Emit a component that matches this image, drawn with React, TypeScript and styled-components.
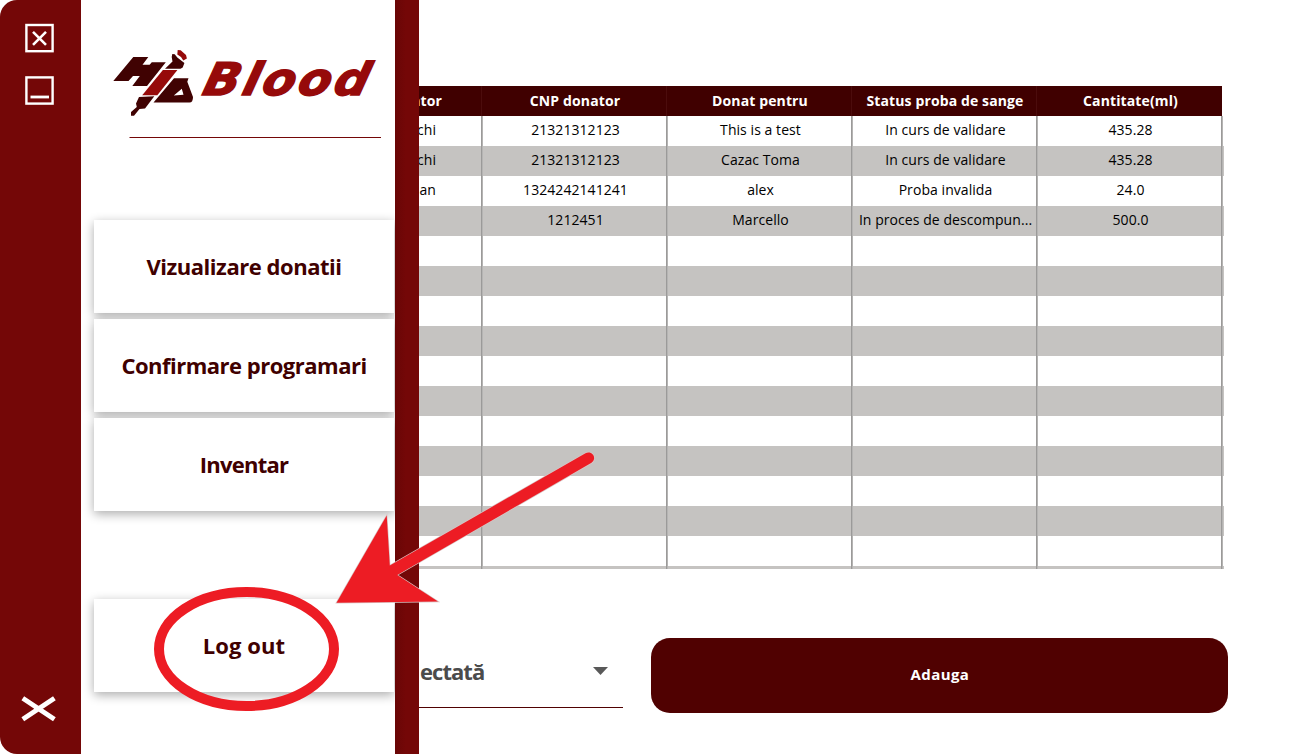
import React from 'react';
import styled, { createGlobalStyle } from 'styled-components';

const GlobalStyle = createGlobalStyle`
  *, *::before, *::after { box-sizing: border-box; }
  body {
    margin: 0;
    background: #fff;
    font-family: "Open Sans", "Noto Sans", sans-serif;
    overflow: hidden;
  }
`;

const Screen = styled.div`
  position: relative;
  display: flex;
  width: 1290px;
  height: 754px;
  overflow: hidden;
  background: #fff;
`;

const Rail = styled.nav`
  display: flex;
  flex-direction: column;
  align-items: center;
  flex: 0 0 81px;
  padding: 23px 3px 31px 0;
  background: #740707;
  border-radius: 17px 0 0 17px;
`;

const RailButton = styled.button<{ $bottom?: boolean }>`
  display: block;
  margin: ${(p) => (p.$bottom ? 'auto 0 0' : '0 0 22px')};
  padding: 0;
  border: 0;
  background: none;
  line-height: 0;
`;

const Drawer = styled.aside`
  display: flex;
  flex-direction: column;
  flex: 0 0 314px;
  padding: 0 1px 0 13px;
  background: #fff;
`;

const LogoBlock = styled.header`
  width: 287px;
  height: 138px;
  margin-bottom: 82px;
`;

const Menu = styled.div`
  display: flex;
  flex-direction: column;
  gap: 6px;
`;

const MenuButton = styled.button<{ $tracking: number; $apart?: boolean }>`
  height: 93px;
  margin-top: ${(p) => (p.$apart ? 82 : 0)}px;
  padding: 0 0 2px;
  border: 0;
  background: #fff;
  box-shadow: 0 3px 10px rgba(0, 0, 0, 0.33);
  color: #400000;
  font: 700 22px/30px "Open Sans", sans-serif;
  letter-spacing: ${(p) => p.$tracking}px;
`;

const Edge = styled.div`
  flex: 0 0 24px;
  background: linear-gradient(90deg, #690606, #740707 45%);
`;

const Main = styled.main`
  display: flex;
  flex-direction: column;
  flex: 1;
  min-width: 0;
  padding-top: 86px;
`;

const Table = styled.div`
  width: 805px;
  height: 483px;
  overflow: hidden;
`;

const HeadRow = styled.div`
  display: grid;
  grid-template-columns: 63px repeat(4, 185px);
  width: 803px;
  height: 30px;
  background: #400000;
`;

const HeadCell = styled.div`
  display: flex;
  align-items: center;
  justify-content: center;
  padding: 0 0 2px 2px;
  border-right: 1px solid #4c0c0c;
  color: #fff;
  font-size: 14px;
  font-weight: 700;
  letter-spacing: 0.12px;
  white-space: nowrap;

  &:first-child {
    justify-content: flex-end;
    padding-right: 39px;
    overflow: hidden;
  }
  &:last-child { border-right: 0; }
`;

const Row = styled.div<{ $shaded: boolean }>`
  display: grid;
  grid-template-columns: 64px repeat(4, 185px);
  height: 30px;
  background: ${(p) => (p.$shaded ? '#c5c3c1' : '#fff')};
`;

const Cell = styled.div`
  display: flex;
  align-items: center;
  justify-content: center;
  padding: 0 0 4px;
  background: linear-gradient(90deg, #9b9a99 50%, #b5b4b3 50%) right / 2px 100% no-repeat;
  color: #000;
  font-size: 14px;
  letter-spacing: 0.06px;
  white-space: nowrap;

  &:first-child {
    justify-content: flex-end;
    padding-right: 47px;
    overflow: hidden;
  }
`;

const Form = styled.section`
  display: flex;
  align-items: flex-start;
  margin-top: 68px;
`;

const Select = styled.div`
  display: flex;
  align-items: center;
  justify-content: space-between;
  width: 204px;
  height: 71px;
  padding: 0 15px 2px 1px;
  border-bottom: 1px solid #500101;
  color: #4b4b4b;
  font-size: 22px;
  font-weight: 700;
  letter-spacing: -0.95px;
`;

const AddButton = styled.button`
  width: 577px;
  height: 75px;
  margin: 0.5px 0 0 28.4px;
  padding: 0 0 3px;
  border: 0;
  border-radius: 19px;
  background: #500101;
  color: #fff;
  font: 700 15px/20px "Open Sans", sans-serif;
  letter-spacing: 0.4px;
`;

const Annotation = styled.svg`
  position: absolute;
  inset: 0;
  pointer-events: none;
`;

const columns = ['ator', 'CNP donator', 'Donat pentru', 'Status proba de sange', 'Cantitate(ml)'];

const donations = [
  ['chi', '21321312123', 'This is a test', 'In curs de validare', '435.28'],
  ['chi', '21321312123', 'Cazac Toma', 'In curs de validare', '435.28'],
  ['an', '1324242141241', 'alex', 'Proba invalida', '24.0'],
  ['', '1212451', 'Marcello', 'In proces de descompun...', '500.0'],
];

const rows = Array.from({ length: 16 }, (_, i) => donations[i] ?? ['', '', '', '', '']);

function Logo() {
  return (
    <svg width="287" height="138" viewBox="94 0 287 138">
      <g fill="#400202">
        <path d="M133.3 57H148.3L142.5 64.8H149.6L151.8 62.3H165.8L147 86H132.3L139.8 76H133L128.5 81H113.3Z" />
        <path d="M172.3 54L174.7 54.3L177.3 57.5L184.4 63L182.7 67.5L180.5 68.7H165L172.5 61.5L171.7 57Z" />
        <path fillRule="evenodd" d="M174 78.2H188.5L187.3 81.7L193 97Q193 102.6 189.5 102.6H153.5ZM181.8 88.8L173.8 95.6L183.5 94.8Z" />
        <path d="M139 97L154.3 96.3L145 108.5L139.5 109L134 115.7H131V112L136.8 107L136 103.5Z" />
      </g>
      <g fill="#960a0a">
        <path d="M162.9 70H177.4L157.3 95.2H142.2Z" />
        <path d="M177.7 50L180.7 50.3L186 55L186.9 58.5L183.3 60.5L181 57L177.3 54.5Z" />
      </g>
      <text
        transform="translate(201 94.5) skewX(-14) scale(1.06 1)"
        fill="#960a0a"
        stroke="#960a0a"
        strokeWidth="1.5"
        fontFamily="DejaVu Sans"
        fontSize="45"
        fontWeight="700"
        fontStyle="italic"
        textLength="155.5"
      >
        Blood
      </text>
      <path d="M129.5 137.5H381" stroke="#740707" strokeWidth="1.2" />
    </svg>
  );
}

export default function App() {
  return (
    <>
      <GlobalStyle />
      <Screen>
        <Rail>
          <RailButton aria-label="Close">
            <svg width="30" height="30" fill="none" stroke="#fff">
              <rect x="2.4" y="2" width="26.2" height="26.2" strokeWidth="2.4" />
              <path d="M9 8.8L22 21.8M22 8.8L9 21.8" strokeWidth="2.6" />
            </svg>
          </RailButton>
          <RailButton aria-label="Minimize">
            <svg width="30" height="30" fill="none" stroke="#fff">
              <rect x="2.4" y="2.4" width="26.2" height="26.2" strokeWidth="2.4" />
              <path d="M6.5 22H25" strokeWidth="2.8" />
            </svg>
          </RailButton>
          <RailButton aria-label="Close menu" $bottom>
            <svg width="36" height="28" fill="none" stroke="#fff" strokeWidth="4.9">
              <path d="M1.8 3.2L33.4 24.2M33.4 3.2L1.8 24.2" />
            </svg>
          </RailButton>
        </Rail>
        <Drawer>
          <LogoBlock>
            <Logo />
          </LogoBlock>
          <Menu>
            <MenuButton $tracking={-0.46}>Vizualizare donatii</MenuButton>
            <MenuButton $tracking={-0.5}>Confirmare programari</MenuButton>
            <MenuButton $tracking={-0.75}>Inventar</MenuButton>
            <MenuButton $tracking={0.1} $apart>Log out</MenuButton>
          </Menu>
        </Drawer>
        <Edge />
        <Main>
          <Table>
            <HeadRow>
              {columns.map((c) => (
                <HeadCell key={c}>{c}</HeadCell>
              ))}
            </HeadRow>
            {rows.map((r, i) => (
              <Row key={i} $shaded={i % 2 === 1}>
                {r.map((v, j) => (
                  <Cell key={j}>{v}</Cell>
                ))}
              </Row>
            ))}
          </Table>
          <Form>
            <Select>
              ectată
              <svg width="15" height="8">
                <path d="M0 0H15L7.5 8Z" fill="#595959" />
              </svg>
            </Select>
            <AddButton>Adauga</AddButton>
          </Form>
        </Main>
        <Annotation width="1290" height="754">
          <ellipse cx="246.5" cy="649" rx="87.5" ry="57" fill="none" stroke="#ed1c24" strokeWidth="10" />
          <path
            d="M386.7 515.5L336.5 602.8L438 601.5L397.3 575L591.5 462.8A5.5 5.5 0 0 0 585.5 453.3L389.8 565.5Z"
            fill="#ed1c24"
            stroke="#d9c5c5"
            strokeWidth="1.4"
            paintOrder="stroke"
          />
        </Annotation>
      </Screen>
    </>
  );
}
